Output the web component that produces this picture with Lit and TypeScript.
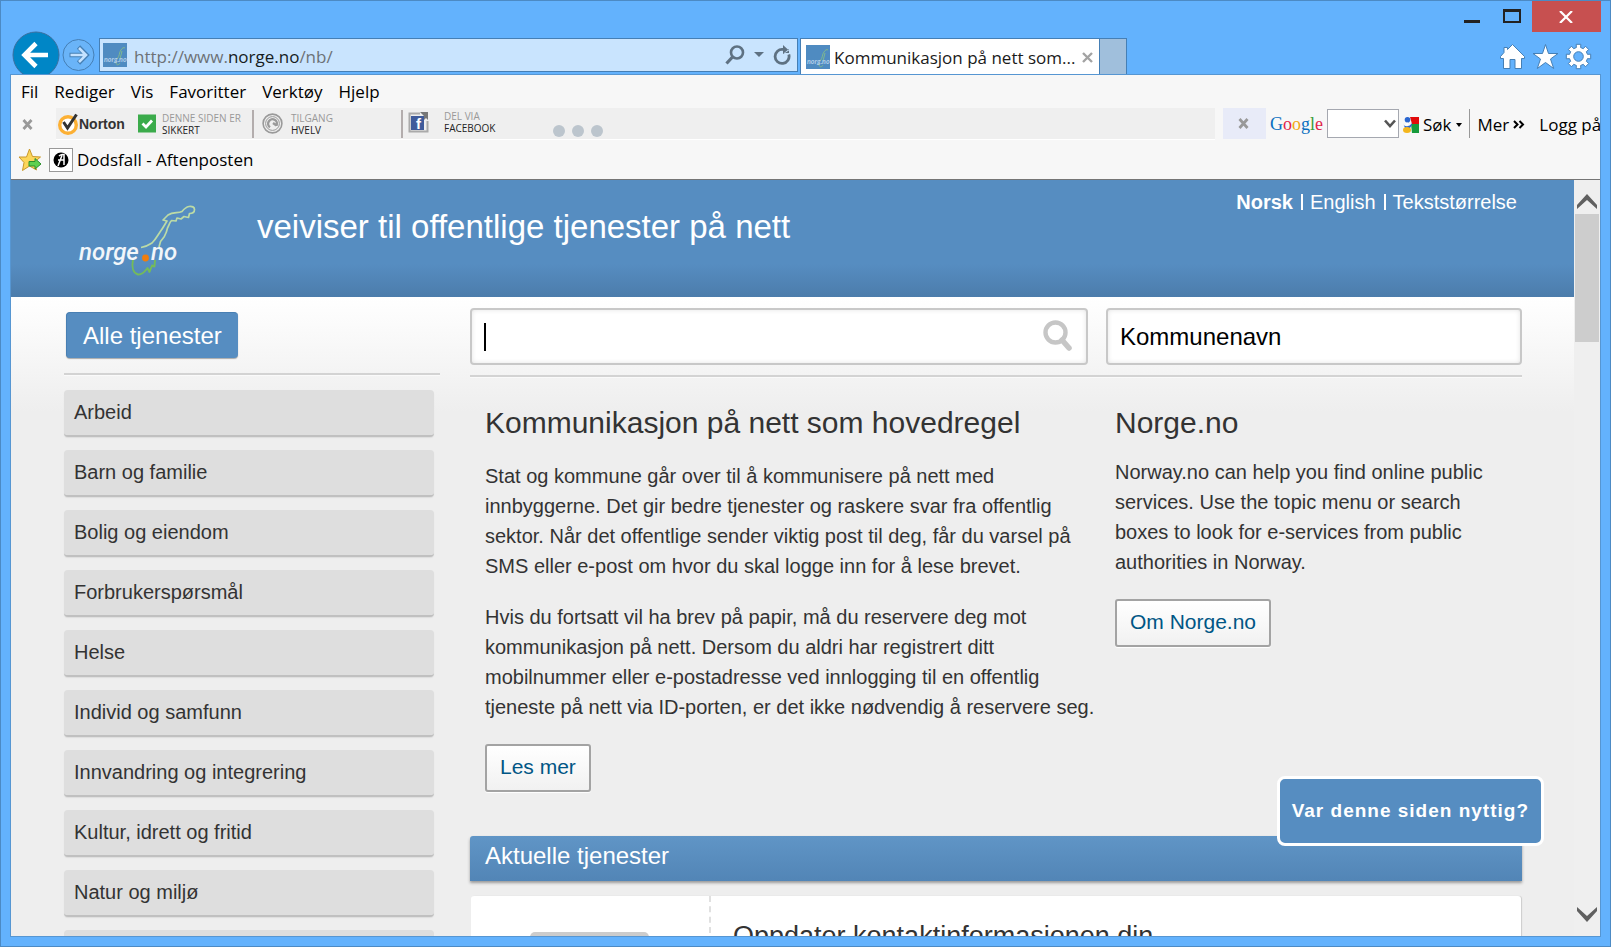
import { LitElement, html, css, svg } from "lit";
import { customElement, property } from "lit/decorators.js";

const topics = [
  "Arbeid",
  "Barn og familie",
  "Bolig og eiendom",
  "Forbrukerspørsmål",
  "Helse",
  "Individ og samfunn",
  "Innvandring og integrering",
  "Kultur, idrett og fritid",
  "Natur og miljø",
];

const menus = ["Fil", "Rediger", "Vis", "Favoritter", "Verktøy", "Hjelp"];

function gearPath(teeth: number, outer: number, inner: number, c: number): string {
  const step = (Math.PI * 2) / teeth;
  const at = (r: number, a: number) =>
    `${(c + r * Math.cos(a)).toFixed(2)} ${(c + r * Math.sin(a)).toFixed(2)}`;
  let d = "";
  for (let i = 0; i < teeth; i++) {
    const a = i * step;
    d += `${i ? "L" : "M"}${at(inner, a - step * 0.3)}L${at(outer, a - step * 0.24)}L${at(outer, a + step * 0.24)}L${at(inner, a + step * 0.3)}`;
  }
  return d + "Z";
}

const norwayOutline = svg`
  <path d="M52 52.500C57 51.500 60 50 63 48C67 44 69 40 71 37C74 33 76 29 78 26L74 25L79 20C84 16.500 89 18.500 93 16.500C95 14 97 12 100 11.500C103 11 105.500 12 105.500 14.500C105.500 18 103 18.500 100.500 18.500L99.500 22.500L95 21.500L92 24L88 23L87 26L82.500 25.500C80 28 80 31 78.500 33C77.500 38 76 40 75 42L71.500 46.500L70 52"
    fill="none" stroke="#bcdba6" stroke-width="1.700" stroke-linejoin="round"/>
  <path d="M44 65C42.500 72 44 78 49 79.500C54 80 56 76 58.500 73L60.500 77L63 70.500L65.500 71.500L66 65"
    fill="none" stroke="#74bb5a" stroke-width="1.900" stroke-linejoin="round"/>`;

@customElement("norge-favicon")
class NorgeFavicon extends LitElement {
  static styles = css`
    :host { display: block; flex: none; width: 24px; height: 24px; }
    svg { display: block; }
    .tiny { font: italic 700 7px "Lato", sans-serif; fill: #b4d0ea; }
  `;
  render() {
    return html`<svg width="24" height="24" viewBox="0 0 24 24" aria-hidden="true">
      <rect width="24" height="24" fill="#4f8bc1" />
      <path d="M14 16C17 13 16 9 18 7C19 5 21 4 22 5M19 8C18 11 18 13 17 16M13 19C13 23 16 22 17 20"
        fill="none" stroke="#7fb88f" stroke-width="1" />
      <text class="tiny" x="1" y="19">norg.no</text>
    </svg>`;
  }
}

@customElement("browser-nav")
class BrowserNav extends LitElement {
  static styles = css`
    :host { display: flex; height: 73px; flex: none; position: relative; overflow: hidden; }
    button { border: 0; padding: 0; background: none; font: inherit; color: inherit; display: flex; align-items: center; justify-content: center; }
    svg { display: block; }
    .row { display: flex; flex: 1; min-width: 0; align-items: flex-start; padding-top: 37px; font: 17px/24px "Open Sans", sans-serif; color: #1a1a1a; }
    .history { display: flex; flex: none; align-items: center; height: 34px; padding-left: 2px; gap: 2px; margin-right: 4px; }
    .address { display: flex; align-items: center; flex: 700 1 0; min-width: 0; height: 34px; box-sizing: border-box; border: 1px solid #457fb5; background: #c9e4fe; padding: 0 6px 0 3px; gap: 7px; margin-right: 2px; }
    .url { flex: 1; white-space: nowrap; color: #6d7276; padding-top: 3px; }
    .url b { font-weight: 400; color: #161c22; }
    .tools { display: flex; gap: 9px; align-items: center; }
    .tab { display: flex; align-items: center; box-sizing: border-box; width: 300px; height: 37px; flex: none; border: 1px solid #457fb5; border-bottom: 0; background: #fff; padding: 0 6px 0 5px; gap: 4px; }
    .tab .name { flex: 1; white-space: nowrap; overflow: hidden; text-overflow: ellipsis; padding-top: 1px; }
    .newtab { width: 27px; height: 37px; flex: none; box-sizing: border-box; border: 1px solid #457fb5; border-left: 0; border-bottom: 0; background: #a0bfdc; }
    .side { flex: 473 1 0; box-sizing: border-box; display: flex; justify-content: flex-end; gap: 6px; padding: 5px 9px 0 0; }
    .caption { position: absolute; top: 0; right: 0; display: flex; height: 31px; gap: 22px; }
    .close { width: 69px; padding-right: 2px; background: #c75050; margin-left: -11px; }
  `;
  render() {
    return html`
      <div class="row">
        <div class="history">
          <button aria-label="Tilbake"><svg width="48" height="48" viewBox="0 0 48 48">
            <circle cx="24" cy="24" r="23" fill="#0086c6" stroke="#3a6f9f" />
            <path d="M13 24H36M24 12.500L12.500 24L24 35.500" fill="none" stroke="#fff" stroke-width="4.600" />
          </svg></button>
          <button aria-label="Fremover"><svg width="33" height="34" viewBox="0 0 33 34">
            <circle cx="16.500" cy="17" r="15.500" fill="#6ab4f8" stroke="#457fb5" />
            <path d="M7.500 17H24M16.500 9L24.500 17L16.500 25" fill="none" stroke="#457fb5" stroke-width="4.600" />
            <path d="M8.500 17H23M17 10L24 17L17 24" fill="none" stroke="#c4e2ff" stroke-width="2.600" />
          </svg></button>
        </div>
        <div class="address">
          <norge-favicon></norge-favicon>
          <span class="url">http://www.<b>norge.no</b>/nb/</span>
          <div class="tools">
            <button aria-label="Søk"><svg width="20" height="20" viewBox="0 0 20 20"><circle cx="12" cy="7.500" r="6" fill="none" stroke="#5e7182" stroke-width="2.600" /><path d="M7.500 12L1.500 18.500" stroke="#5e7182" stroke-width="3.200" /></svg></button>
            <button aria-label="Vis adresser"><svg width="10" height="6" viewBox="0 0 10 6"><path d="M0 0H10L5 5Z" fill="#5e7182" /></svg></button>
            <button aria-label="Oppdater"><svg width="18" height="20" viewBox="0 0 18 20"><path d="M15.800 9.500A7 7 0 1 1 10 4.500" fill="none" stroke="#5e7182" stroke-width="2.800" /><path d="M10 0L16 5.500L10 9V0M11 8H16V4Z" fill="#5e7182" /></svg></button>
          </div>
        </div>
        <div class="tab">
          <norge-favicon></norge-favicon>
          <span class="name">Kommunikasjon på nett som...</span>
          <button aria-label="Lukk fane"><svg width="11" height="11" viewBox="0 0 11 11"><path d="M1 1L10 10M10 1L1 10" stroke="#a3a3a3" stroke-width="2.400" /></svg></button>
        </div>
        <button class="newtab" aria-label="Ny fane"></button>
        <div class="side">
          <button aria-label="Hjem"><svg width="27" height="27" viewBox="0 0 27 27"><path d="M5 9.500V4.500H8.500V6.500L13.500 1.500L25.500 13.500V15.500H22.500V25.500H16V16.500H11V25.500H4.500V15.500H1.500V13.500Z" fill="#fff" stroke="#457fb5" /></svg></button>
          <button aria-label="Favoritter"><svg width="27" height="27" viewBox="0 0 27 27"><path d="M13.500 1.500L16.500 10.500H26L18.500 16L21.700 25.500L13.500 19.500L5.300 25.500L8.500 16L1 10.500H10.500Z" fill="#fff" stroke="#457fb5" /></svg></button>
          <button aria-label="Verktøy"><svg width="27" height="27" viewBox="0 0 27 27"><path d="${gearPath(8, 12.4, 9.2, 13.5)}" fill="#fff" stroke="#457fb5" stroke-linejoin="round" /><circle cx="13.500" cy="13.500" r="4.800" fill="#63b2fd" stroke="#457fb5" /></svg></button>
        </div>
      </div>
      <div class="caption">
        <button aria-label="Minimer"><svg width="17" height="31" viewBox="0 0 17 31"><path d="M0 20.500H16" stroke="#222" stroke-width="3" /></svg></button>
        <button aria-label="Maksimer"><svg width="18" height="31" viewBox="0 0 18 31"><path d="M1 9V21H17V9" fill="none" stroke="#222" stroke-width="2" /><path d="M0 9.500H18" stroke="#222" stroke-width="3" /></svg></button>
        <button class="close" aria-label="Lukk"><svg width="14" height="12" viewBox="0 0 14 12"><path d="M1 0L13 12M13 0L1 12" stroke="#fff" stroke-width="2.200" /></svg></button>
      </div>
    `;
  }
}

@customElement("browser-toolbars")
class BrowserToolbars extends LitElement {
  static styles = css`
    :host { display: block; flex: none; background: #f7f7f7; border-bottom: 1px solid #757575; font: 17px/24px "Open Sans", sans-serif; color: #000; }
    button, a { border: 0; padding: 0; margin: 0; background: none; font: inherit; color: inherit; text-decoration: none; display: flex; align-items: center; white-space: nowrap; }
    svg { display: block; flex: none; }
    .menu { display: flex; align-items: flex-start; gap: 16px; padding: 5px 10px 0; height: 28px; }
    .bars { display: flex; height: 32px; overflow: hidden; }
    .shut { width: 45px; justify-content: center; padding-right: 12px; box-sizing: border-box; flex: none; }
    .norton { flex: 1; min-width: 0; display: flex; height: 31px; background: #efefef; border-bottom: 1px solid #fff; align-items: center; }
    .brand { font: 700 14px/20px "Liberation Sans", sans-serif; color: #333; padding-left: 1px; box-sizing: border-box; width: 82px; }
    .two { display: flex; flex-direction: column; align-items: flex-start; font: 10px/12px "Open Sans", sans-serif; color: #999; text-align: left; }
    .two b { font-weight: 400; color: #222; }
    .cell { gap: 6px; height: 28px; border-right: 2px solid #b3adad; box-sizing: border-box; }
    .safe { width: 116px; }
    .vault { width: 149px; padding-left: 8px; gap: 8px; }
    .share { gap: 15px; padding: 0 0 3px 5px; width: 150px; box-sizing: border-box; }
    .dots { display: flex; gap: 7px; padding-top: 15px; }
    .dot { width: 12px; height: 12px; border-radius: 50%; background: #bcc5cd; }
    .google { display: flex; flex: none; width: 385px; align-items: center; height: 31px; overflow: hidden; padding-left: 8px; box-sizing: border-box; }
    .shut2 { width: 43px; height: 31px; background: #e8ebf8; justify-content: center; padding-right: 2px; box-sizing: border-box; flex: none; }
    .word { font: 18px/24px "Liberation Serif", serif; padding: 0 4px; }
    .b { color: #0a6fc0; } .r { color: #e0244b; } .y { color: #f2a813; } .g { color: #3b9c3b; }
    .pick { display: grid; align-items: center; flex: none; }
    .pick select, .pick svg { grid-area: 1 / 1; }
    .pick select { appearance: none; width: 72px; height: 29px; border: 1px solid #a5a8b0; border-radius: 0; background: #fff; }
    .pick svg { justify-self: end; margin-right: 3px; pointer-events: none; }
    .sok { gap: 4px; padding: 2px 0 0 4px; }
    .sep { width: 1px; height: 29px; background: #999; margin: 0 8px 0 7px; flex: none; }
    .mer { gap: 4px; margin-right: 14px; padding-top: 2px; }
    .login { padding-top: 2px; }
    .fav { display: flex; align-items: center; height: 39px; padding: 0 0 0 7px; gap: 7px; box-sizing: border-box; }
    .fav a { gap: 4px; }
    .f { font: 700 15px "Liberation Sans", sans-serif; fill: #fff; }
  `;
  render() {
    const cross = svg`<path d="M1.500 1L9.500 10M9.500 1L1.500 10" stroke="#999" stroke-width="2.800"/>`;
    return html`
      <nav class="menu" aria-label="Meny">${menus.map((m) => html`<button>${m}</button>`)}</nav>
      <div class="bars">
        <button class="shut" aria-label="Lukk verktøylinje"><svg width="11" height="11">${cross}</svg></button>
        <div class="norton">
          <button class="brand"><svg width="22" height="22" viewBox="0 0 22 22"><circle cx="11" cy="12" r="8.300" fill="#fff" stroke="#fcb034" stroke-width="3.400" /><path d="M6.500 9L10.500 15L19.500 1.500" fill="none" stroke="#333" stroke-width="3" /></svg>Norton</button>
          <button class="cell safe"><svg width="18" height="19" viewBox="0 0 18 19"><rect width="18" height="18" y=".5" fill="#3bab4b" /><path d="M4.500 9.500L8 13L14 6.500" fill="none" stroke="#fff" stroke-width="2.800" /></svg>
            <span class="two">DENNE SIDEN ER<b>SIKKERT</b></span></button>
          <button class="cell vault"><svg width="21" height="21" viewBox="0 0 21 21" fill="none" stroke="#9a9a9a"><circle cx="10.500" cy="10.500" r="9.400" stroke-width="1.600" /><circle cx="10.500" cy="10.500" r="6.900" stroke-width="1" /><path d="M8 14.200A4.400 4.400 0 1 1 14.500 12.500M14.500 12.500L11 10" stroke-width="2.400" /></svg>
            <span class="two">TILGANG<b>HVELV</b></span></button>
          <button class="share"><svg width="21" height="21" viewBox="0 0 21 21"><path d="M12 1.500H1.500V19.500H19.500V9" fill="none" stroke="#aaa" stroke-width="2" /><rect x="3" y="4" width="13" height="14" fill="#3f5b9b" /><path d="M12 0H20V8L18 6L16 8V4L14.500 2.500Z" fill="#777" /><text class="f" x="8" y="17">f</text></svg>
            <span class="two">DEL VIA<b>FACEBOOK</b></span></button>
          <div class="dots"><span class="dot"></span><span class="dot"></span><span class="dot"></span></div>
        </div>
        <div class="google">
          <button class="shut2" aria-label="Lukk Google"><svg width="11" height="11">${cross}</svg></button>
          <span class="word"><span class="b">G</span><span class="r">o</span><span class="y">o</span><span class="b">g</span><span class="g">l</span><span class="r">e</span></span>
          <label class="pick"><select aria-label="Google-søk"><option></option></select>
            <svg width="12" height="9" viewBox="0 0 12 9"><path d="M1 1.500L6 7L11 1.500" fill="none" stroke="#555" stroke-width="2.600" /></svg></label>
          <button class="sok"><svg width="16" height="16" viewBox="0 0 16 16"><path d="M7 0H16V7H9Z" fill="#e10b0b" /><path d="M8 7H16V16H9Z" fill="#169a3c" /><circle cx="4.500" cy="2.800" r="2.800" fill="#2a66d0" /><path d="M0 6Q1 10 5 9T8 5L9 8L7 11H2Z" fill="#2a66d0" /><circle cx="4" cy="7" r="1.500" fill="#fff" /><ellipse cx="4" cy="13" rx="4" ry="3" fill="#f4b61c" /></svg>Søk
            <svg width="6" height="4"><path d="M0 0H6L3 4Z" fill="#000" /></svg></button>
          <span class="sep"></span>
          <button class="mer">Mer <svg width="12" height="9" viewBox="0 0 12 9"><path d="M1 1L4.500 4.500L1 8M6.500 1L10 4.500L6.500 8" fill="none" stroke="#000" stroke-width="2" /></svg></button>
          <button class="login">Logg på</button>
        </div>
      </div>
      <div class="fav">
        <button aria-label="Legg til favoritt"><svg width="24" height="24" viewBox="0 0 24 24"><path d="M11.500 1L14.500 8.500L22.500 9L16.500 14L18.500 22L11.500 18L4.500 22.500L6 14.500L1 9H8.500Z" fill="#fcd65a" stroke="#c9982c" /><path d="M11 13.500H17V10.500L23 16L17 21V18H11Z" fill="#5fd04f" stroke="#2c8f2c" /></svg></button>
        <a href="#"><svg width="24" height="24" viewBox="0 0 24 24"><rect x=".5" y=".5" width="23" height="23" fill="#fff" stroke="#999" /><circle cx="12" cy="12" r="7.500" fill="#000" /><path d="M13.500 6L9 18M10 8Q12 6 15 6.500V17M9 12H15" fill="none" stroke="#fff" stroke-width="1.500" /></svg>Dodsfall - Aftenposten</a>
      </div>
    `;
  }
}

@customElement("site-button")
class SiteButton extends LitElement {
  @property() label = "";
  static styles = css`
    :host { display: block; }
    a { display: inline-block; box-sizing: border-box; height: 48px; padding: 0 13px; border: 2px solid #a3a3a3; border-radius: 3px; background: linear-gradient(#fff, #f1f1f1); box-shadow: 0 1px 1px #fff; font: 21px/42px "Liberation Sans", sans-serif; color: #005685; text-decoration: none; }
  `;
  render() {
    return html`<a href="#">${this.label}</a>`;
  }
}

@customElement("norge-page")
class NorgePage extends LitElement {
  static styles = css`
    :host { display: block; position: relative; overflow: hidden; background: #eee linear-gradient(#fff, #eee) 0 117px / 100% 115px no-repeat; font: 20px/30px "Liberation Sans", sans-serif; color: #333; }
    h1, h2, h3, p, ul { margin: 0; padding: 0; font-weight: 400; }
    a { color: inherit; text-decoration: none; }
    header { display: flex; align-items: flex-start; height: 117px; box-sizing: border-box; padding: 0 57px 0 60px; background: linear-gradient(#568dc1 0, #568dc1 72%, #4c7cab 100%); color: #fff; }
    .logo { width: 186px; flex: none; padding-top: 15px; }
    .logo svg { display: block; }
    .mark { font: italic 500 24px "Roboto", sans-serif; fill: #f2f6fa; }
    .slogan { flex: 1; font-size: 33px; line-height: 40px; padding-top: 27px; white-space: nowrap; }
    .lang { display: flex; align-items: center; padding-top: 14px; line-height: 16px; }
    .lang a + a { border-left: 2px solid #fff; margin-left: 8px; padding-left: 7px; }
    .lang .on { font-weight: 700; }
    .body { display: flex; gap: 30px; padding: 0 52px 0 53px; }
    .left { width: 376px; flex: none; padding-top: 15px; }
    .all { display: inline-block; box-sizing: border-box; height: 46px; margin-left: 2px; padding: 0 16px; font-size: 24px; line-height: 46px; border: 1px solid #487fb3; border-width: 1px 0 0 1px; border-radius: 4px; background: #568dc1; color: #fff; box-shadow: 0 1px 1px #aaa; vertical-align: top; }
    .rule { height: 2px; background: #d3d3d3; border-bottom: 1px solid #fafafa; }
    .left .rule { margin: 15px 0 14px; }
    .topics { list-style: none; display: flex; flex-direction: column; gap: 13px; margin-right: 6px; }
    .topics a { display: block; height: 45px; line-height: 44px; padding-left: 10px; background: #dedede; border-bottom: 2px solid #c0c0c0; border-radius: 4px; box-shadow: 0 1px 1px #ddd; }
    .topics .rest { height: 45px; border-radius: 4px; background: #dedede; }
    .main { flex: 1; min-width: 0; padding-top: 11px; }
    .fields { display: grid; grid-template-columns: 618fr 416fr; column-gap: 18px; }
    .cols { display: grid; grid-template-columns: 628fr 407fr; column-gap: 17px; }
    .field { position: relative; display: block; }
    .field input { display: block; box-sizing: border-box; width: 100%; height: 57px; border: 2px solid #c8c8c8; border-radius: 4px; background: #fff; box-shadow: inset 0 0 5px #e4e4e4; padding: 0 12px; font: 24px "Liberation Sans", sans-serif; color: #000; outline: 0; }
    .find { position: absolute; right: 14px; top: 11px; border: 0; padding: 0; background: none; }
    .find svg { display: block; }
    .caret { position: absolute; left: 14px; top: 15px; width: 2px; height: 28px; background: #000; }
    .main .rule { margin: 10px 0 0; }
    .text { padding: 23px 0 44px 15px; }
    .aside { padding-top: 23px; }
    h2 { font-size: 30px; line-height: 44px; }
    .text h2 { margin-bottom: 16px; }
    .aside h2 { margin-bottom: 12px; }
    .text p { margin-bottom: 21px; }
    .text p + p { margin-bottom: 22px; }
    .aside p { margin-bottom: 22px; }
    .current { height: 45px; box-sizing: border-box; padding-left: 15px; font-size: 24px; line-height: 40px; color: #fff; background: linear-gradient(#6095c6, #5285b6); border-radius: 3px 3px 0 0; box-shadow: 0 2px 3px #999; }
    .card { display: flex; height: 120px; margin: 15px 1px 0; background: #fff; border-radius: 3px; box-shadow: 1px 0 1px #ccc; }
    .thumb { width: 240px; flex: none; box-sizing: border-box; border-right: 2px dashed #e0e0e0; padding: 36px 60px 0 59px; }
    .pic { height: 60px; border-radius: 5px; background: #ccc; }
    .card h3 { font-size: 27px; line-height: 30px; padding: 25px 0 0 22px; }
    .feedback { position: absolute; right: 30px; bottom: 90px; box-sizing: border-box; height: 70px; padding: 0 12px; border: 3px solid #fff; border-radius: 8px; background: #568dc1; color: #fff; font: 700 19px "Liberation Sans", sans-serif; letter-spacing: 1px; }
  `;
  render() {
    return html`
      <header>
        <a class="logo" href="#" aria-label="norge.no"><svg width="125" height="85" viewBox="0 0 125 85">
          <g transform="translate(18 0)">${norwayOutline}</g>
          <text class="mark" x="8" y="65">norge</text><circle cx="74.500" cy="63" r="3.400" fill="#f07d0c" /><text class="mark" x="80" y="65">no</text>
        </svg></a>
        <p class="slogan">veiviser til offentlige tjenester på nett</p>
        <nav class="lang" aria-label="Språk"><a class="on" href="#">Norsk</a><a href="#">English</a><a href="#">Tekststørrelse</a></nav>
      </header>
      <div class="body">
        <nav class="left" aria-label="Tjenester">
          <a class="all" href="#">Alle tjenester</a>
          <div class="rule"></div>
          <ul class="topics">${topics.map((t) => html`<li><a href="#">${t}</a></li>`)}<li class="rest"></li></ul>
        </nav>
        <main class="main">
          <div class="fields">
            <label class="field"><input type="text" aria-label="Søk" /><span class="caret"></span>
              <button class="find" aria-label="Søk"><svg width="32" height="34" viewBox="0 0 32 34"><circle cx="13.500" cy="13.500" r="10" fill="none" stroke="#c6c6c6" stroke-width="4.400" /><path d="M20 21L27 29" stroke="#c6c6c6" stroke-width="5.500" stroke-linecap="round" /></svg></button></label>
            <label class="field"><input type="text" aria-label="Kommunenavn" .value=${"Kommunenavn"} /></label>
          </div>
          <div class="rule"></div>
          <div class="cols">
            <article class="text">
              <h2>Kommunikasjon på nett som hovedregel</h2>
              <p>Stat og kommune går over til å kommunisere på nett med<br />innbyggerne. Det gir bedre tjenester og raskere svar fra offentlig<br />sektor. Når det offentlige sender viktig post til deg, får du varsel på<br />SMS eller e-post om hvor du skal logge inn for å lese brevet.</p>
              <p>Hvis du fortsatt vil ha brev på papir, må du reservere deg mot<br />kommunikasjon på nett. Dersom du aldri har registrert ditt<br />mobilnummer eller e-postadresse ved innlogging til en offentlig<br />tjeneste på nett via ID-porten, er det ikke nødvendig å reservere seg.</p>
              <site-button label="Les mer"></site-button>
            </article>
            <aside class="aside">
              <h2>Norge.no</h2>
              <p>Norway.no can help you find online public<br />services. Use the topic menu or search<br />boxes to look for e-services from public<br />authorities in Norway.</p>
              <site-button label="Om Norge.no"></site-button>
            </aside>
          </div>
          <h2 class="current">Aktuelle tjenester</h2>
          <section class="card">
            <div class="thumb"><div class="pic"></div></div>
            <h3>Oppdater kontaktinformasjonen din</h3>
          </section>
        </main>
      </div>
      <button class="feedback">Var denne siden nyttig?</button>
    `;
  }
}

@customElement("app-root")
class AppRoot extends LitElement {
  static styles = css`
    :host { display: block; }
    .window { display: flex; flex-direction: column; height: 100vh; box-sizing: border-box; border: 1px solid #4c8ac4; background: #63b2fd; padding: 0 9px 9px; }
    .frame { display: flex; flex-direction: column; flex: 1; min-height: 0; border: 1px solid #5696d2; }
    .view { display: flex; flex: 1; min-height: 0; background: #efefef; }
    norge-page { flex: 1; min-width: 0; }
    .scroll { width: 26px; flex: none; display: flex; flex-direction: column; align-items: center; justify-content: space-between; padding: 14px 0; box-sizing: border-box; }
    .top { display: flex; flex-direction: column; align-items: center; gap: 5px; }
    .thumb { width: 24px; height: 128px; background: #cdcdcd; }
    svg { display: block; }
  `;
  render() {
    return html`<div class="window">
      <browser-nav></browser-nav>
      <div class="frame">
        <browser-toolbars></browser-toolbars>
        <div class="view">
          <norge-page></norge-page>
          <div class="scroll" aria-hidden="true">
            <div class="top">
              <svg width="20" height="15" viewBox="0 0 20 15"><path d="M0 11L10 0L20 11V15L10 6L0 15Z" fill="#606060" /></svg>
              <div class="thumb"></div>
            </div>
            <svg width="20" height="15" viewBox="0 0 20 15"><path d="M0 4L10 15L20 4V0L10 9L0 0Z" fill="#606060" /></svg>
          </div>
        </div>
      </div>
    </div>`;
  }
}
